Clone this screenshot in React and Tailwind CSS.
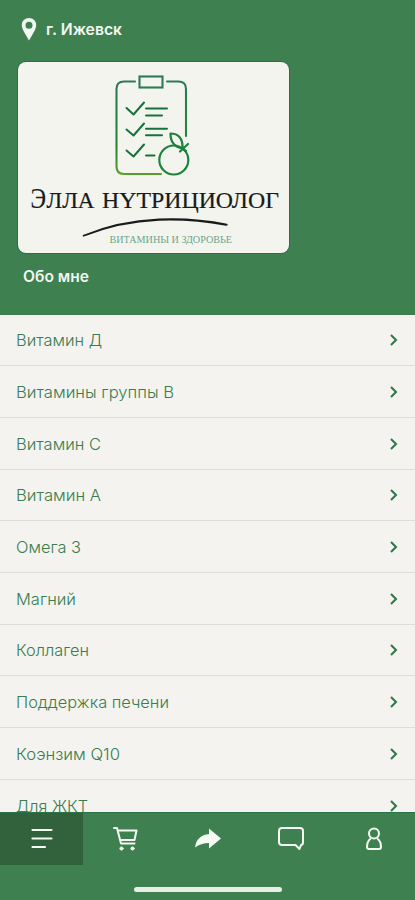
import React from "react";

const items = [
  { label: "Витамин Д", width: 86 },
  { label: "Витамины группы В", width: 158 },
  { label: "Витамин С", width: 85 },
  { label: "Витамин А", width: 85 },
  { label: "Омега 3", width: 65 },
  { label: "Магний", width: 60 },
  { label: "Коллаген", width: 73 },
  { label: "Поддержка печени", width: 153 },
  { label: "Коэнзим Q10", width: 104 },
  { label: "Для ЖКТ", width: 72 },
];

function Logo() {
  return (
    <svg viewBox="18 62 271 191" className="block h-[191px] w-[271px]" fill="none">
      <defs>
        <linearGradient id="board" x1="0" y1="75" x2="0" y2="175" gradientUnits="userSpaceOnUse">
          <stop offset="0" stopColor="#2c7a58" />
          <stop offset="0.7" stopColor="#25853a" />
          <stop offset="1" stopColor="#58a02c" />
        </linearGradient>
      </defs>
      <g stroke="url(#board)" strokeWidth="2.1" strokeLinecap="round">
        <path d="M135 81.500H124Q116.500 81.500 116.500 89V166.500Q116.500 174 124 174H161" />
        <path d="M167 81.500H178.500Q186 81.500 186 89V136" />
        <rect x="139.500" y="76.500" width="23" height="11" />
      </g>
      <g stroke="#14733d" strokeWidth="2" strokeLinecap="round" strokeLinejoin="round">
        <path d="M126.500 108l7 6.500L144 102.500M126.500 129.500l7 6L144 123.500M126.500 150.500l7 6L144 144.500" />
        <path d="M146 108.500h21M146 115.500h16M146 128.800h21M146 135.300h16M146 155.500h8.500" />
      </g>
      <g stroke="#1c833b" strokeWidth="2.200" strokeLinecap="round" strokeLinejoin="round">
        <circle cx="173.800" cy="160" r="14.500" />
        <path d="M182.500 148.500C174 147 170.500 142 170.500 133.500C178.500 133.500 183 138.500 182.500 148.500ZM180 151.500L188 144M182.500 148.500L186 151" />
      </g>
      <g fill="#171b19" stroke="#171b19" strokeWidth="0.2" fontFamily="'Liberation Serif', serif">
        <text x="30.500" y="208" fontSize="29" textLength="15.500" lengthAdjust="spacingAndGlyphs">Э</text>
        <text x="46.500" y="208" fontSize="24" textLength="48" lengthAdjust="spacingAndGlyphs">ЛЛА</text>
        <text x="102" y="208" fontSize="24" textLength="177" lengthAdjust="spacingAndGlyphs">НYТРИЦИОЛОГ</text>
      </g>
      <path d="M83 235Q118 220.500 159 218.600Q194 217 227 223.800Q229 225.500 226 225.700Q192 219.500 159 220.700Q119 222.500 84 236.500Q82 236.500 83 235Z" fill="#171b19" />
      <text x="109.500" y="242.500" fontSize="10" fill="#6aa58b" fontFamily="'Liberation Serif', serif" textLength="122.500" lengthAdjust="spacingAndGlyphs">ВИТАМИНЫ И ЗДОРОВЬЕ</text>
    </svg>
  );
}

function Label({ children, width, className, fontSize }) {
  return (
    <svg width={width + 4} height="24" className={"block overflow-visible " + className}>
      <text x="0" y="18" fontSize={fontSize} textLength={width} lengthAdjust="spacingAndGlyphs" fill="currentColor">
        {children}
      </text>
    </svg>
  );
}

function Row({ item }) {
  return (
    <li className="flex h-[51.700px] shrink-0 items-center justify-between border-b border-[#dededb] px-4 pt-px">
      <Label width={item.width} fontSize={16.5} className="font-light text-[#397d50]">
        {item.label}
      </Label>
      <svg viewBox="0 0 10 14" className="h-3.5 w-2.5" fill="none" stroke="#2b7746" strokeWidth="2">
        <path d="M2 2l5 5-5 5" />
      </svg>
    </li>
  );
}

export default function App() {
  return (
    <div className="flex h-[900px] w-[415px] flex-col overflow-hidden bg-[#3e804f] font-['Inter','Roboto',sans-serif]">
      <header className="h-[314.500px] shrink-0 pl-[18px] pt-[17px]">
        <div className="flex h-6 items-center gap-[9px] pl-[3px] text-[#f2f7f1]">
          <svg viewBox="0 0 16 24" className="h-6 w-4" fill="currentColor" fillRule="evenodd">
            <path d="M8 1C3.900 1 .8 4.100.8 8c0 2.200.8 4 2 6.500L8 23.500l5.200-9c1.200-2.500 2-4.300 2-6.500C15.200 4.100 12.100 1 8 1Zm0 3.700a3.500 3.500 0 1 1 0 7 3.500 3.500 0 0 1 0-7Z" />
          </svg>
          <Label width={76} fontSize={16} className="font-semibold">г. Ижевск</Label>
        </div>
        <div className="mt-[21px] h-[191px] w-[271px] overflow-hidden rounded-[8px] bg-[#f4f4ef] ring-1 ring-[#237343]">
          <Logo />
        </div>
        <div className="mt-[11px] pl-[5px] text-[#f2f7f1]">
          <Label width={66} fontSize={15.5} className="font-semibold">Обо мне</Label>
        </div>
      </header>

      <ul className="flex h-[497.500px] shrink-0 flex-col overflow-hidden bg-[#f4f3ef]">
        {items.map((item) => (
          <Row key={item.label} item={item} />
        ))}
      </ul>

      <nav className="grid h-[53px] shrink-0 grid-cols-5 border-t border-[#28734a] text-[#f5faf2]">
        <div className="flex items-center justify-center bg-[#32623c]">
          <svg viewBox="0 0 24 24" className="h-6 w-6" fill="none" stroke="currentColor" strokeWidth="2.200" strokeLinecap="round">
            <path d="M2.500 3h19M2.500 11.500h19M2.500 20h12.500" />
          </svg>
        </div>
        <div className="flex items-center justify-center">
          <svg viewBox="0 0 26 26" className="h-[26px] w-[26px]" fill="none" stroke="currentColor" strokeWidth="2" strokeLinecap="round" strokeLinejoin="round">
            <path d="M2 2H5L9 17.500H22.500M5.500 4.500H24.500L22.500 14H8.500" />
            <circle cx="9.500" cy="22.500" r="1.600" fill="currentColor" strokeWidth="1" />
            <circle cx="20.500" cy="22.500" r="1.600" fill="currentColor" strokeWidth="1" />
          </svg>
        </div>
        <div className="flex items-center justify-center">
          <svg viewBox="0 0 28 24" className="h-6 w-7" fill="currentColor">
            <path d="M15 1.500L27 11.500 15 21.500V16C9.500 16 5 17.500 1 20.500C2 12.500 7 7.500 15 7Z" />
          </svg>
        </div>
        <div className="flex items-center justify-center">
          <svg viewBox="0 0 26 26" className="h-[26px] w-[26px]" fill="none" stroke="currentColor" strokeWidth="2" strokeLinejoin="round">
            <path d="M4 2H22Q25 2 25 5V16Q25 19 23 19L21.500 23L17.500 19H4Q1 19 1 16V5Q1 2 4 2Z" />
          </svg>
        </div>
        <div className="flex items-center justify-center">
          <svg viewBox="0 0 18 26" className="h-[26px] w-[18px]" fill="none" stroke="currentColor" strokeWidth="2" strokeLinejoin="round">
            <circle cx="9" cy="7.500" r="5" />
            <path d="M5.700 12.500C3 14.500 2 17 2 21Q2 23 4 23H14Q16 23 16 21C16 17 15 14.500 12.300 12.500" />
          </svg>
        </div>
      </nav>
      <div className="flex justify-center pt-[22px]">
        <div className="h-[5px] w-[148px] rounded-full bg-[#e9eee9]" />
      </div>
    </div>
  );
}
